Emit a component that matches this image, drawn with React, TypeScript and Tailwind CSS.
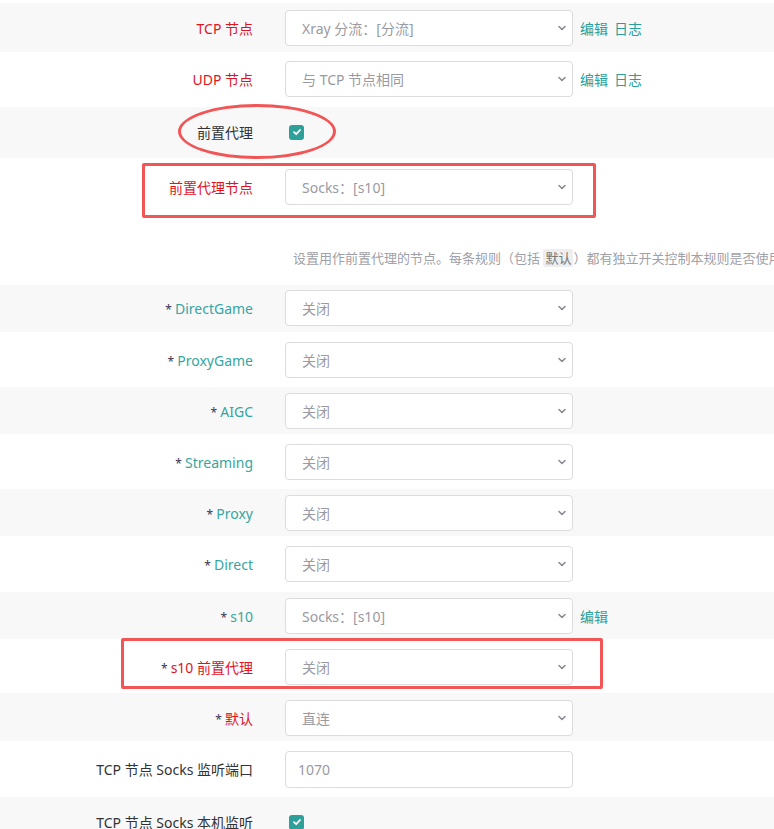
import React from 'react';

const font = { fontFamily: '"Noto Sans", "Noto Sans CJK SC", sans-serif' };

const Chevron = () => (
  <svg width="10" height="10" viewBox="0 0 10 10" className="absolute right-[5px] top-1/2 -translate-y-1/2">
    <path d="M2 3.5 L5 6.5 L8 3.5" fill="none" stroke="#8a8a95" strokeWidth="1.6" strokeLinecap="round" strokeLinejoin="round" />
  </svg>
);

const Select: React.FC<{ value: string }> = ({ value }) => (
  <div className="relative w-[288px] h-[36px] bg-white border border-[#dcdcdf] rounded-[4px] flex items-center pl-[16px] text-[14px] text-[#9a9aa3]">
    {value}
    <Chevron />
  </div>
);

const Check = () => (
  <div className="w-[15px] h-[15px] rounded-[3px] bg-[#2f9f9a] flex items-center justify-center">
    <svg width="10" height="10" viewBox="0 0 10 10">
      <path d="M2 5.2 L4.2 7.2 L8 3" fill="none" stroke="white" strokeWidth="1.8" strokeLinecap="round" strokeLinejoin="round" />
    </svg>
  </div>
);

const Links: React.FC<{ log?: boolean }> = ({ log }) => (
  <div className="flex gap-[6px] ml-[7px] text-[14px] text-[#2a9f9a]">
    <span>编辑</span>
    {log && <span>日志</span>}
  </div>
);

type RowProps = {
  label: React.ReactNode;
  gray?: boolean;
  h: string;
  pt: string;
  children: React.ReactNode;
};

const Row: React.FC<RowProps> = ({ label, gray, h, pt, children }) => (
  <div className={`${h} ${pt} ${gray ? 'bg-[#f8f8f9]' : 'bg-white'}`}>
    <div className="flex items-center h-[36px]">
      <div className="w-[253px] text-right text-[14px] shrink-0">{label}</div>
      <div className="ml-[32px] flex items-center">{children}</div>
    </div>
  </div>
);

const Star: React.FC<{ text: string; red?: boolean }> = ({ text, red }) => (
  <span>
    <span className="text-[#3a3550] text-[12px]">* </span>
    <span className={red ? 'text-[#e0141e]' : 'text-[#35a6a1]'}>{text}</span>
  </span>
);

export default function App() {
  return (
    <div className="relative w-[774px] h-[829px] overflow-hidden bg-white pt-[3px]" style={font}>
      <Row label={<span className="text-[#e0141e]">TCP 节点</span>} gray h="h-[49px]" pt="pt-[7px]">
        <Select value="Xray 分流：[分流]" />
        <Links log />
      </Row>
      <Row label={<span className="text-[#e0141e]">UDP 节点</span>} h="h-[55px]" pt="pt-[9px]">
        <Select value="与 TCP 节点相同" />
        <Links log />
      </Row>
      <Row label={<span className="text-[#333]">前置代理</span>} gray h="h-[51px]" pt="pt-[7px]">
        <div className="ml-[4px]">
          <Check />
        </div>
      </Row>
      <div className="bg-white h-[127px] flex flex-col">
        <div className="flex items-center mt-[11px]">
          <div className="w-[253px] text-right text-[14px] text-[#e0141e] shrink-0">前置代理节点</div>
          <div className="ml-[32px]">
            <Select value="Socks：[s10]" />
          </div>
        </div>
        <div className="ml-[293px] mt-[44px] whitespace-nowrap text-[13px] text-[#a0a0a8]">
          设置用作前置代理的节点。每条规则（包括 <span className="bg-[#eeeeee] text-[#777] px-[2px] rounded-[2px]">默认</span>）都有独立开关控制本规则是否使用前置代理。
        </div>
      </div>
      <Row label={<Star text="DirectGame" />} gray h="h-[47px]" pt="pt-[5px]">
        <Select value="关闭" />
      </Row>
      <Row label={<Star text="ProxyGame" />} h="h-[55px]" pt="pt-[10px]">
        <Select value="关闭" />
      </Row>
      <Row label={<Star text="AIGC" />} gray h="h-[47px]" pt="pt-[6px]">
        <Select value="关闭" />
      </Row>
      <Row label={<Star text="Streaming" />} h="h-[55px]" pt="pt-[10px]">
        <Select value="关闭" />
      </Row>
      <Row label={<Star text="Proxy" />} gray h="h-[47px]" pt="pt-[6px]">
        <Select value="关闭" />
      </Row>
      <Row label={<Star text="Direct" />} h="h-[56px]" pt="pt-[10px]">
        <Select value="关闭" />
      </Row>
      <Row label={<Star text="s10" />} gray h="h-[47px]" pt="pt-[6px]">
        <Select value="Socks：[s10]" />
        <Links />
      </Row>
      <Row label={<Star text="s10 前置代理" red />} h="h-[54px]" pt="pt-[10px]">
        <Select value="关闭" />
      </Row>
      <Row label={<Star text="默认" red />} gray h="h-[48px]" pt="pt-[7px]">
        <Select value="直连" />
      </Row>
      <Row label={<span className="text-[#333]">TCP 节点 Socks 监听端口</span>} h="h-[56px]" pt="pt-[10px]">
        <div className="w-[288px] h-[37px] bg-white border border-[#dcdcdf] rounded-[4px] flex items-center pl-[12px] text-[14px] text-[#9a9aa3]">
          1070
        </div>
      </Row>
      <Row label={<span className="text-[#333]">TCP 节点 Socks 本机监听</span>} gray h="h-[51px]" pt="pt-[7px]">
        <div className="ml-[4px]">
          <Check />
        </div>
      </Row>

      {/* annotations */}
      <div className="absolute left-[178px] top-[104px] w-[158px] h-[55px] rounded-[50%] border-[3px] border-[#f25555]" />
      <div className="absolute left-[142px] top-[163px] w-[454px] h-[55px] rounded-[2px] border-[3px] border-[#f25555]" />
      <div className="absolute left-[121px] top-[638px] w-[482px] h-[51px] rounded-[2px] border-[3px] border-[#f25555]" />
    </div>
  );
}
